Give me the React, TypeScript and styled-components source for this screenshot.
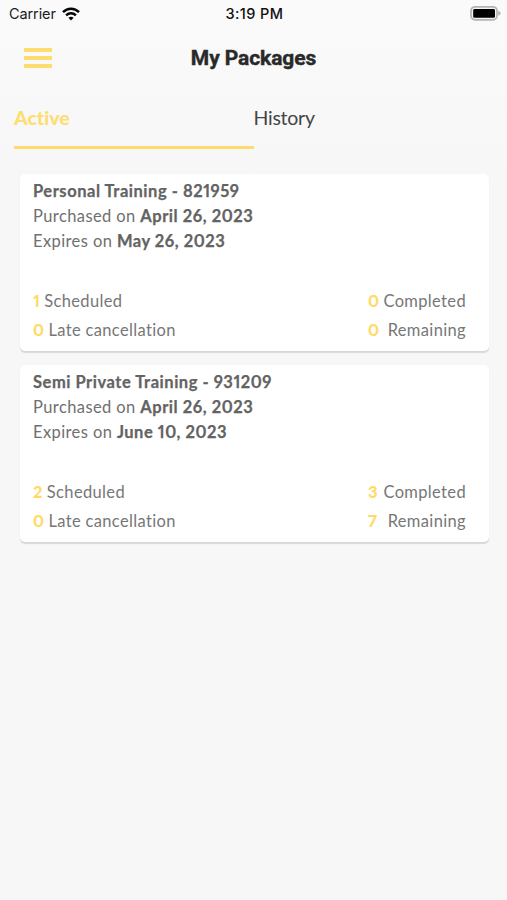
import React from "react";
import styled, { createGlobalStyle } from "styled-components";

const GlobalStyle = createGlobalStyle`
  * { box-sizing: border-box; }
  body { margin: 0; background: #f7f7f7; }
`;

const Screen = styled.div`
  width: 507px;
  height: 900px;
  overflow: hidden;
  background: linear-gradient(#fafafa, #f7f7f7 170px);
  color: #707070;
  font-family: Lato, sans-serif;
  font-variant-ligatures: none;
  font-variant-numeric: proportional-nums;
`;

const StatusBar = styled.div`
  height: 28px;
  padding: 0 6px 1px 9px;
  display: grid;
  grid-template-columns: 1fr auto 1fr;
  align-items: center;
  color: #1c1c1c;
  font: 400 14.5px/27px Inter, sans-serif;
`;

const Carrier = styled.div`
  display: flex;
  align-items: center;
  gap: 6px;
  letter-spacing: -0.1px;
`;

const Clock = styled.div`
  margin-right: 1px;
  font-size: 14.5px;
  font-weight: 500;
  letter-spacing: 0.4px;
  color: #111;
`;

const BatterySlot = styled.div`
  display: flex;
  justify-content: flex-end;
`;

const Header = styled.header`
  height: 60px;
  padding: 0 24px;
  display: grid;
  grid-template-columns: 28px 1fr 28px;
  align-items: center;
`;

const MenuButton = styled.button`
  display: flex;
  flex-direction: column;
  gap: 4px;
  padding: 0;
  border: 0;
  background: none;
`;

const MenuLine = styled.span`
  height: 3.8px;
  background: #fddc70;
`;

const Title = styled.h1`
  margin: 0;
  text-align: center;
  font: 700 21px/30px Roboto, sans-serif;
  letter-spacing: -0.1px;
  -webkit-text-stroke: 0.4px #292929;
  color: #292929;
`;

const Tabs = styled.nav`
  height: 61px;
  padding: 0 14px;
  display: grid;
  grid-template-columns: 1fr 1fr;
`;

const Tab = styled.div<{ $active?: boolean }>`
  padding-top: 17px;
  font-size: 19.5px;
  line-height: 26px;
  letter-spacing: ${(p) => (p.$active ? "0" : "-0.25px")};
  font-weight: ${(p) => (p.$active ? 900 : 400)};
  color: ${(p) => (p.$active ? "#fedd74" : "#444")};
  border-bottom: 3px solid ${(p) => (p.$active ? "#fddb70" : "transparent")};
`;

const List = styled.main`
  padding: 25px 18.5px 0 19.5px;
  display: flex;
  flex-direction: column;
  gap: 14px;
`;

const Card = styled.article`
  height: 177px;
  padding: 5px 22.5px 0 13.5px;
  border-radius: 5px;
  background: #fff;
  box-shadow: 0 1.5px 1px rgba(0, 0, 0, 0.13);
  font-size: 16.5px;
`;

const Line = styled.div`
  height: 25px;
  line-height: 25px;
  letter-spacing: 0.4px;
  white-space: pre;
`;

const Strong = styled.strong`
  font-weight: 700;
  letter-spacing: 0.53px;
  color: #636363;
  -webkit-text-stroke: 0.25px #636363;
`;

const Stats = styled.div`
  margin-top: 32.5px;
  display: grid;
  grid-template-columns: 1fr 98px;
  grid-auto-rows: 29.5px;
  line-height: 29px;
  letter-spacing: 0.35px;
`;

const Stat = styled.div<{ $spread?: boolean }>`
  display: flex;
  justify-content: ${(p) => (p.$spread ? "space-between" : "flex-start")};
  gap: 4px;
  white-space: nowrap;
  color: #777;
`;

const Count = styled.span`
  font-weight: 900;
  color: #fedb68;
`;

const WifiIcon = () => (
  <svg width="18" height="14" viewBox="0 0 18 14" fill="none" stroke="#050505" strokeWidth="2.5">
    <path d="M1 5.1C5.5 .5 12.5 .5 17 5.1" />
    <path d="M4.1 8.3C6.9 5.5 11.1 5.5 13.9 8.3" />
    <path d="M6.4 10.7C8 9.3 10 9.3 11.6 10.7L9 13.4Z" fill="#050505" stroke="none" />
  </svg>
);

const BatteryIcon = () => (
  <svg width="31" height="15" viewBox="0 0 31 15">
    <rect x="1" y=".8" width="26" height="13" rx="4" fill="#f5f5f5" stroke="#b4b4b4" strokeWidth="1.7" />
    <rect x="3.2" y="3" width="21.8" height="8.8" rx="1.4" fill="#000" />
    <path d="M28.2 4.8C31.4 6 31.4 8.6 28.2 9.8Z" fill="#b4b4b4" />
  </svg>
);

const packages = [
  { name: "Personal Training - 821959", purchased: "April 26, 2023", expires: "May 26, 2023", scheduled: 1, completed: 0, late: 0, remaining: 0 },
  { name: "Semi Private Training - 931209", purchased: "April 26, 2023", expires: "June 10, 2023", scheduled: 2, completed: 3, late: 0, remaining: 7 },
];

export default function App() {
  return (
    <Screen>
      <GlobalStyle />
      <StatusBar>
        <Carrier>Carrier <WifiIcon /></Carrier>
        <Clock>3:19 PM</Clock>
        <BatterySlot><BatteryIcon /></BatterySlot>
      </StatusBar>
      <Header>
        <MenuButton aria-label="Menu"><MenuLine /><MenuLine /><MenuLine /></MenuButton>
        <Title>My Packages</Title>
      </Header>
      <Tabs>
        <Tab $active>Active</Tab>
        <Tab>History</Tab>
      </Tabs>
      <List>
        {packages.map((p) => (
          <Card key={p.name}>
            <Line><Strong>{p.name}</Strong></Line>
            <Line>Purchased on <Strong>{p.purchased}</Strong></Line>
            <Line>Expires on <Strong>{p.expires}</Strong></Line>
            <Stats>
              <Stat><Count>{p.scheduled}</Count>Scheduled</Stat>
              <Stat $spread><Count>{p.completed}</Count>Completed</Stat>
              <Stat><Count>{p.late}</Count>Late cancellation</Stat>
              <Stat $spread><Count>{p.remaining}</Count>Remaining</Stat>
            </Stats>
          </Card>
        ))}
      </List>
    </Screen>
  );
}
